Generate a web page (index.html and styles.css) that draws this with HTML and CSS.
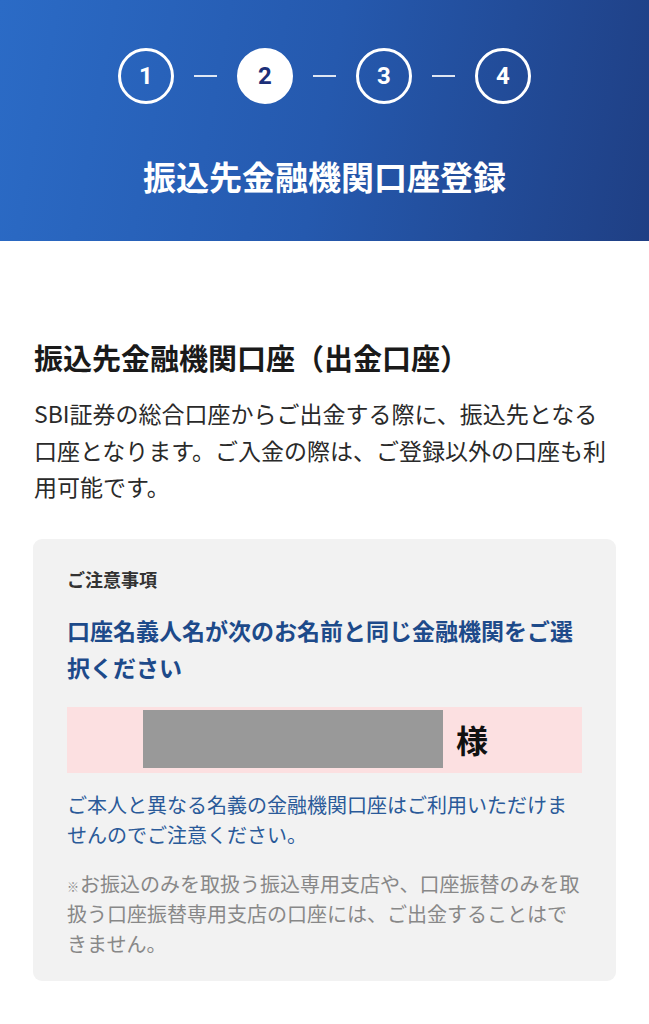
FILE: index.html
```html
<!DOCTYPE html>
<html lang="ja">
<head>
    <meta charset="UTF-8">
    <meta name="viewport" content="width=device-width, initial-scale=1.0">
    <title>振込先金融機関口座登録</title>
    <link rel="stylesheet" href="styles.css">
</head>
<body>
    <header class="page-header">
        <ol class="steps">
            <li class="step">1</li>
            <li class="step-line"></li>
            <li class="step current">2</li>
            <li class="step-line"></li>
            <li class="step">3</li>
            <li class="step-line"></li>
            <li class="step">4</li>
        </ol>
        <h1 class="page-title">振込先金融機関口座登録</h1>
    </header>

    <main class="content">
        <h2 class="section-title">振込先金融機関口座（出金口座）</h2>
        <p class="section-text">SBI証券の総合口座からご出金する際に、振込先となる口座となります。ご入金の際は、ご登録以外の口座も利用可能です。</p>

        <div class="notice-box">
            <div class="notice-label">ご注意事項</div>
            <p class="notice-lead">口座名義人名が次のお名前と同じ金融機関をご選択ください</p>
            <div class="holder-name">
                <span class="name-mask"></span>
                <span class="name-suffix">様</span>
            </div>
            <p class="notice-text">ご本人と異なる名義の金融機関口座はご利用いただけませんのでご注意ください。</p>
            <p class="notice-note">お振込のみを取扱う振込専用支店や、口座振替のみを取扱う口座振替専用支店の口座には、ご出金することはできません。</p>
        </div>
    </main>
</body>
</html>
```

FILE: styles.css
```css
body {
    margin: 0;
    padding: 0;
    background: #fff;
    font-family: 'Noto Sans CJK JP', 'Noto Sans', sans-serif;
    color: #222;
}
.page-header {
    height: 241px;
    box-sizing: border-box;
    padding-top: 48px;
    background: linear-gradient(100deg, #2b6bc6 0%, #2559ae 50%, #1f3f84 100%);
    color: #fff;
    text-align: center;
}
.steps {
    display: flex;
    justify-content: center;
    align-items: center;
    margin: 0;
    padding: 0;
    list-style: none;
}
.step {
    width: 56px;
    height: 56px;
    box-sizing: border-box;
    border: 3px solid #fff;
    border-radius: 50%;
    display: flex;
    align-items: center;
    justify-content: center;
    font-family: Roboto, 'Noto Sans', sans-serif;
    font-size: 24px;
    font-weight: 700;
}
.step.current {
    background: #fff;
    color: #1c2f78;
}
.step-line {
    width: 23px;
    height: 2px;
    margin: 0 20px;
    background: rgba(255,255,255,0.85);
}
.page-title {
    margin: 48px 0 0;
    font-size: 33px;
    font-weight: 700;
    line-height: 48px;
}
.content {
    padding: 96px 34px 40px;
}
.section-title {
    margin: 0;
    font-size: 29px;
    font-weight: 700;
    line-height: 40px;
    color: #1a1a1a;
}
.section-text {
    margin: 18px 0 0;
    font-size: 23px;
    line-height: 36.5px;
    color: #2a2a2a;
}
.notice-box {
    margin: 34px -1px 0;
    padding: 27px 34px 22px 34px;
    background: #f2f2f2;
    border-radius: 9px;
}
.notice-label {
    font-size: 18px;
    font-weight: 700;
    line-height: 27px;
    color: #333;
}
.notice-lead {
    margin: 19px 0 0;
    font-size: 23px;
    font-weight: 700;
    line-height: 37px;
    color: #1d4a8a;
}
.holder-name {
    display: flex;
    align-items: center;
    height: 66px;
    margin-top: 21px;
    padding: 3px 0 5px 76px;
    box-sizing: border-box;
    background: #fce0e1;
}
.name-mask {
    width: 300px;
    height: 100%;
    background: #999;
}
.name-suffix {
    margin-left: 13px;
    font-size: 32px;
    font-weight: 700;
    color: #111;
}
.notice-text {
    margin: 17px 0 0;
    font-size: 20px;
    line-height: 30px;
    color: #2a5a99;
}
.notice-note {
    margin: 19px 0 0;
    font-size: 20px;
    line-height: 30px;
    color: #888;
}
/* small kome mark in front of the note */
.notice-note::before {
    content: "※";
    margin-right: 1px;
    font-size: 12px;
    line-height: 1;
}
```
